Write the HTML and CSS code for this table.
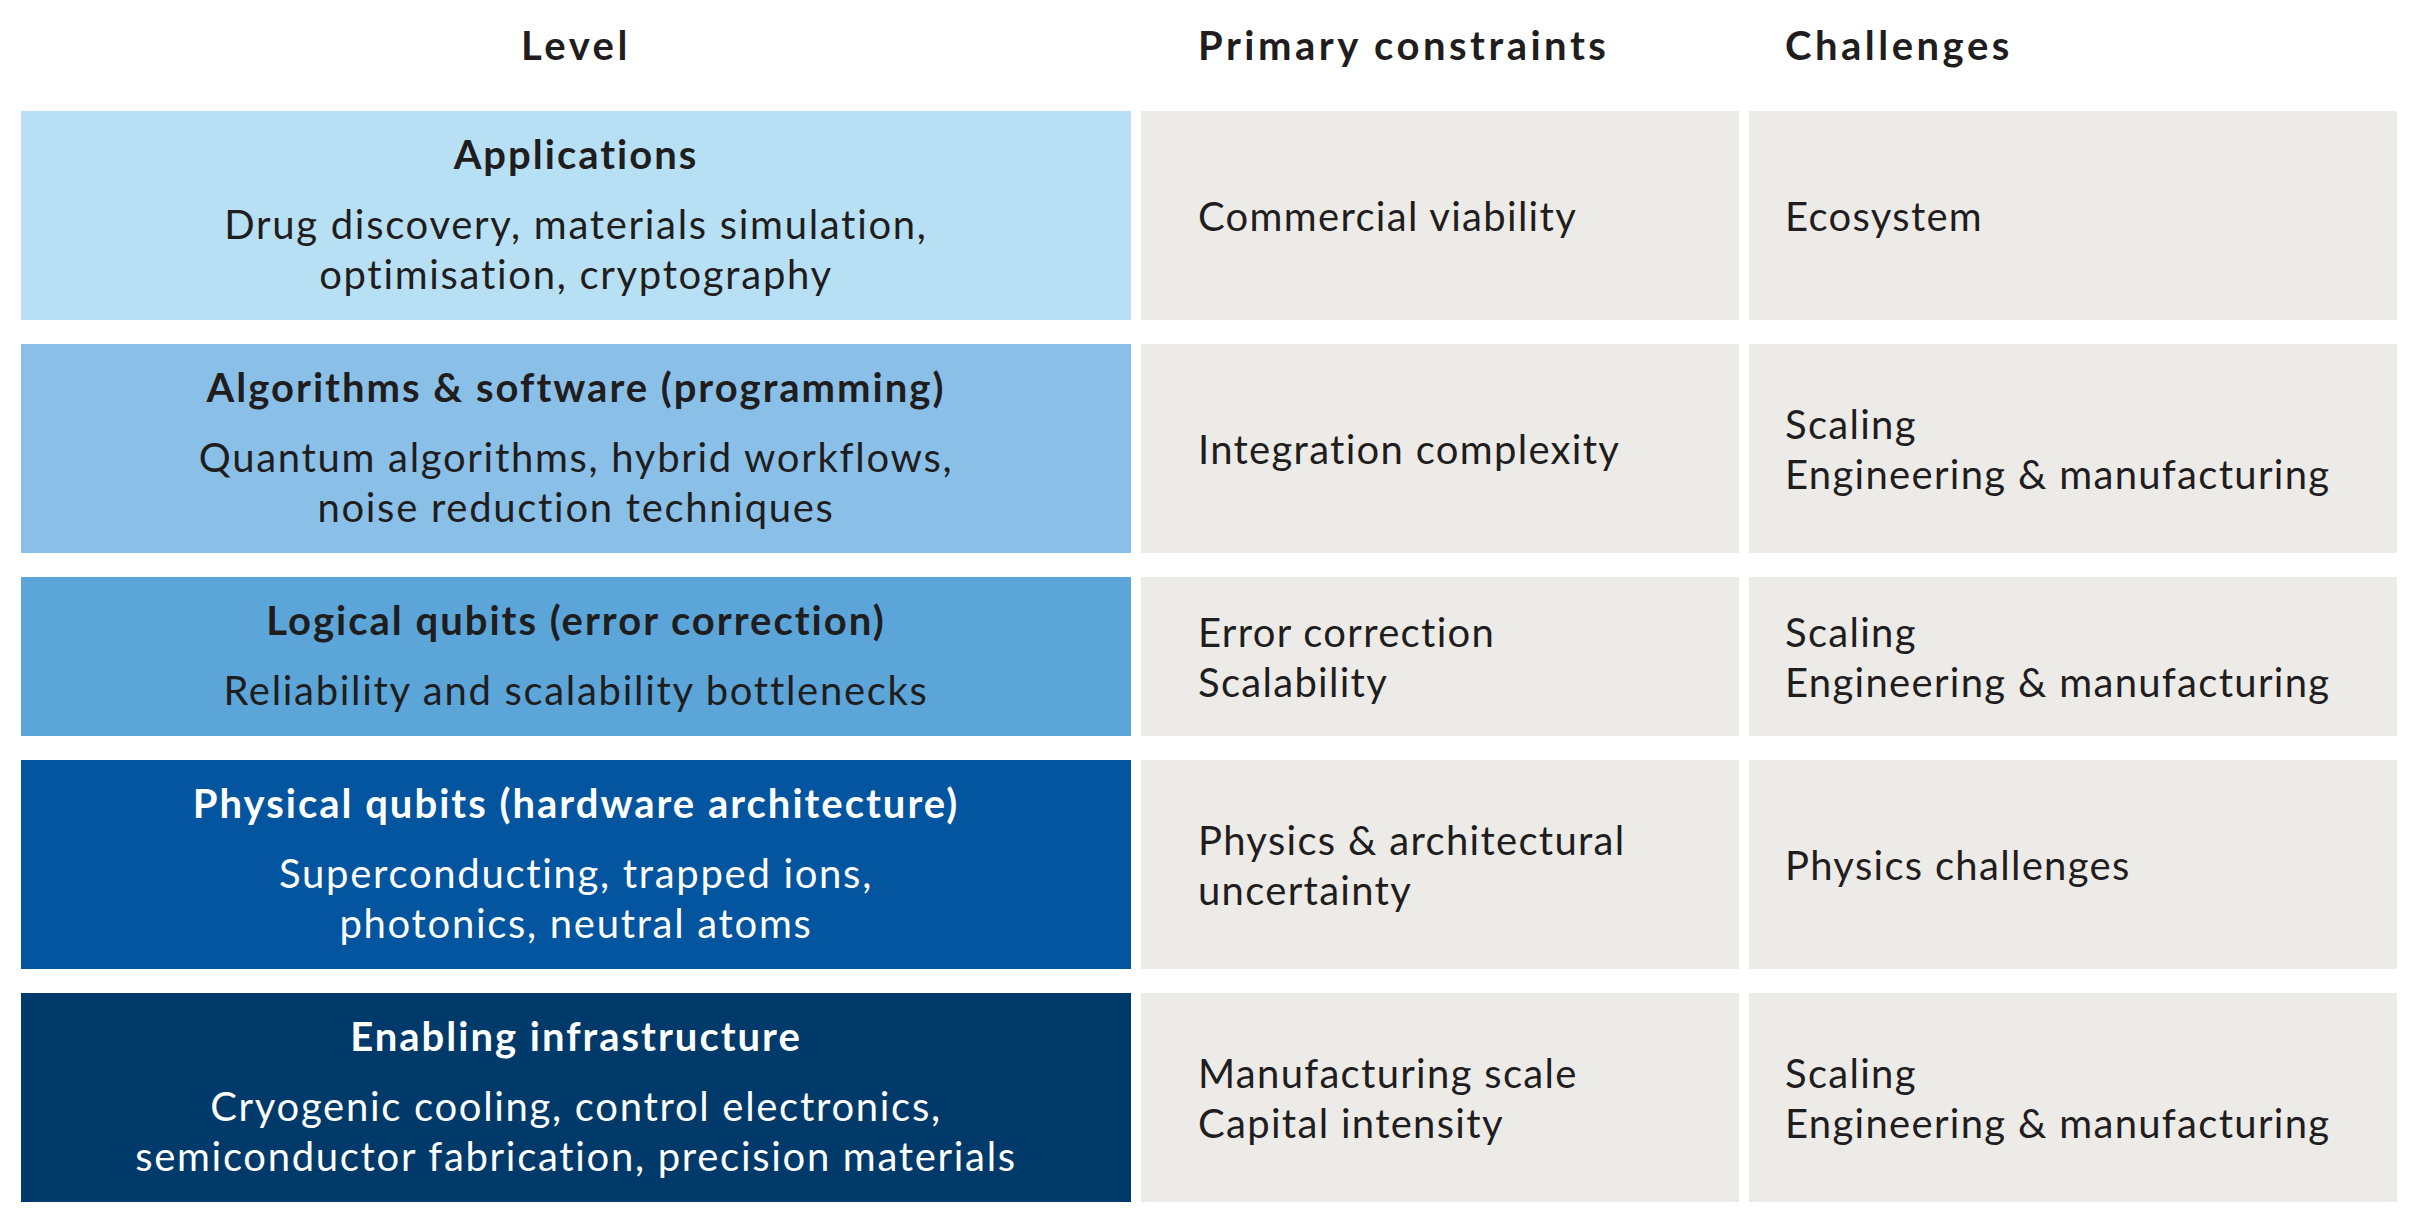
FILE: index.html
```html
<!DOCTYPE html>
<html lang="en">
<head>
<meta charset="utf-8">
<title>Quantum computing stack</title>
<link rel="stylesheet" href="styles.css">
</head>
<body>
<div class="stack">
  <div class="head head-level">Level</div>
  <div class="head head-side head-constraints">Primary constraints</div>
  <div class="head head-side head-challenges">Challenges</div>

  <div class="level level-1">
    <div class="level-title">Applications</div>
    <div class="level-desc">Drug discovery, materials simulation,<br>optimisation, cryptography</div>
  </div>
  <div class="cell cell-constraints">Commercial viability</div>
  <div class="cell cell-challenges">Ecosystem</div>

  <div class="level level-2">
    <div class="level-title">Algorithms &amp; software (programming)</div>
    <div class="level-desc">Quantum algorithms, hybrid workflows,<br>noise reduction techniques</div>
  </div>
  <div class="cell cell-constraints">Integration complexity</div>
  <div class="cell cell-challenges">Scaling<br>Engineering &amp; manufacturing</div>

  <div class="level level-3">
    <div class="level-title">Logical qubits (error correction)</div>
    <div class="level-desc">Reliability and scalability bottlenecks</div>
  </div>
  <div class="cell cell-constraints">Error correction<br>Scalability</div>
  <div class="cell cell-challenges">Scaling<br>Engineering &amp; manufacturing</div>

  <div class="level level-4">
    <div class="level-title">Physical qubits (hardware architecture)</div>
    <div class="level-desc">Superconducting, trapped ions,<br>photonics, neutral atoms</div>
  </div>
  <div class="cell cell-constraints">Physics &amp; architectural<br>uncertainty</div>
  <div class="cell cell-challenges">Physics challenges</div>

  <div class="level level-5">
    <div class="level-title">Enabling infrastructure</div>
    <div class="level-desc">Cryogenic cooling, control electronics,<br>semiconductor fabrication, precision materials</div>
  </div>
  <div class="cell cell-constraints">Manufacturing scale<br>Capital intensity</div>
  <div class="cell cell-challenges">Scaling<br>Engineering &amp; manufacturing</div>
</div>
</body>
</html>
```

FILE: styles.css
```css
html, body {
  margin: 0;
  padding: 0;
  background: #ffffff;
}

body {
  font-family: "Lato", "Open Sans", "Liberation Sans", sans-serif;
  font-size: 40px;
  line-height: 50px;
  letter-spacing: 1.3px;
  color: #1f1d1d;
}

.stack {
  display: grid;
  grid-template-columns: 1110px 598px 648px;
  column-gap: 10px;
  row-gap: 24px;
  padding: 20px 0 0 21px;
}

.head {
  font-weight: 700;
  letter-spacing: 3.5px;
  padding-bottom: 17px;
}

.head-level {
  text-align: center;
}

.head-constraints {
  padding-left: 57px;
}

.head-challenges {
  padding-left: 36px;
}

.level {
  padding: 18px 20px 21px;
  text-align: center;
  display: flex;
  flex-direction: column;
  gap: 20px;
}

.level-title {
  font-weight: 700;
  letter-spacing: 2px;
}

.level-desc {
  letter-spacing: 1.7px;
}

.level-1 { background: #b8e0f4; }
.level-2 { background: #8ac0e7; }
.level-3 { background: #5ba5d9; }
.level-4 { background: #02559e; color: #ffffff; }
.level-5 { background: #003a6b; color: #ffffff; }

.cell {
  background: #edebe8;
  display: flex;
  align-items: center;
}

.cell-constraints {
  padding-left: 57px;
}

.cell-challenges {
  padding-left: 36px;
}
```
